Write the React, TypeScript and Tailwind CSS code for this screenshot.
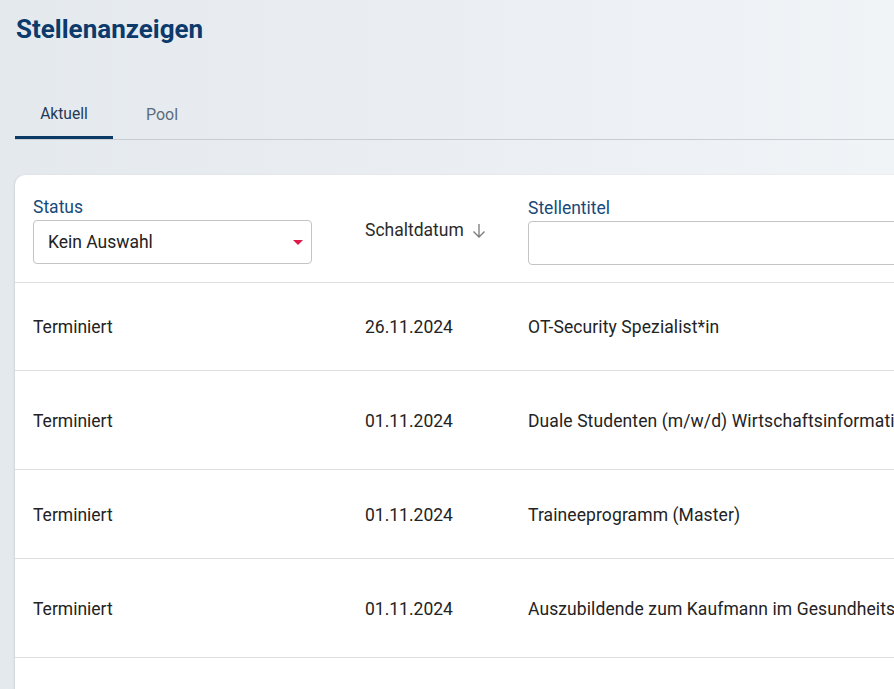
export default function App() {
  const rows = [
    { status: "Terminiert", date: "26.11.2024", title: "OT-Security Spezialist*in", h: "h-[88px]" },
    { status: "Terminiert", date: "01.11.2024", title: "Duale Studenten (m/w/d) Wirtschaftsinformatik", h: "h-[99px]" },
    { status: "Terminiert", date: "01.11.2024", title: "Traineeprogramm (Master)", h: "h-[89px]" },
    { status: "Terminiert", date: "01.11.2024", title: "Auszubildende zum Kaufmann im Gesundheitswesen (m/w/d)", h: "h-[99px]" },
    { status: "Terminiert", date: "01.11.2024", title: "Werkstudent*in IT", h: "h-[99px]" },
  ];

  return (
    <div
      className="h-[689px] w-[894px] overflow-hidden bg-gradient-to-r from-[#e4e9ee] to-[#f1f4f7] pl-[15px]"
      style={{ fontFamily: "Roboto, 'Liberation Sans', sans-serif" }}
    >
      {/* Title */}
      <h1 className="pt-[13px] pl-[1px] text-[26px] font-bold leading-[32px] text-[#0b3a6b]">
        Stellenanzeigen
      </h1>

      {/* Tabs */}
      <div className="mt-[43px] flex border-b border-[#c9cdd2]">
        <div className="flex h-[51px] w-[98px] items-center justify-center border-b-[3px] border-[#0b3a66] pt-[5px] text-[15.6px] text-[#1f3a56]">
          Aktuell
        </div>
        <div className="flex h-[51px] w-[98px] items-center justify-center pt-[3px] text-[16px] text-[#5b6b7c]">
          Pool
        </div>
      </div>

      {/* Card */}
      <div className="mt-[35px] w-[1100px] rounded-tl-[10px] bg-white shadow-[-1px_0_2px_rgba(0,0,0,0.08)]">
        {/* Header */}
        <div className="grid h-[108px] grid-cols-[332px_163px_1fr] border-b border-[#dedede] pl-[18px]">
          <div className="flex flex-col pt-[22px]">
            <label className="text-[17.5px] leading-[20px] text-[#174a7a]">Status</label>
            <div className="mt-[3px] flex h-[44px] w-[279px] items-center justify-between rounded-[4px] border border-[#c4c4c4] pl-[14px] pr-[8px]">
              <span className="text-[17.5px] text-[#222]">Kein Auswahl</span>
              <svg width="10" height="5" viewBox="0 0 10 5">
                <path d="M0 0h10L5 5z" fill="#e0194b" />
              </svg>
            </div>
          </div>
          <div className="flex items-center gap-[8px] pt-[4px] text-[17.5px] text-[#2b2b2b]">
            Schaltdatum
            <svg width="14" height="15" viewBox="0 0 14 15" fill="none" stroke="#7a7a7a" strokeWidth="1.3">
              <path d="M7 1v13M1.5 8.5L7 14l5.5-5.5" />
            </svg>
          </div>
          <div className="flex flex-col pt-[23px]">
            <label className="text-[17.5px] leading-[20px] text-[#174a7a]">Stellentitel</label>
            <div className="mt-[3px] h-[44px] w-full rounded-[4px] border border-[#c4c4c4]" />
          </div>
        </div>

        {/* Rows */}
        {rows.map((r, i) => (
          <div
            key={i}
            className={`grid ${r.h} grid-cols-[332px_163px_1fr] items-center border-b border-[#dedede] pl-[18px] pt-[2px] text-[17.5px] text-[#232323]`}
          >
            <div>{r.status}</div>
            <div>{r.date}</div>
            <div className="whitespace-nowrap tracking-[0.1px]">{r.title}</div>
          </div>
        ))}
      </div>
    </div>
  );
}
